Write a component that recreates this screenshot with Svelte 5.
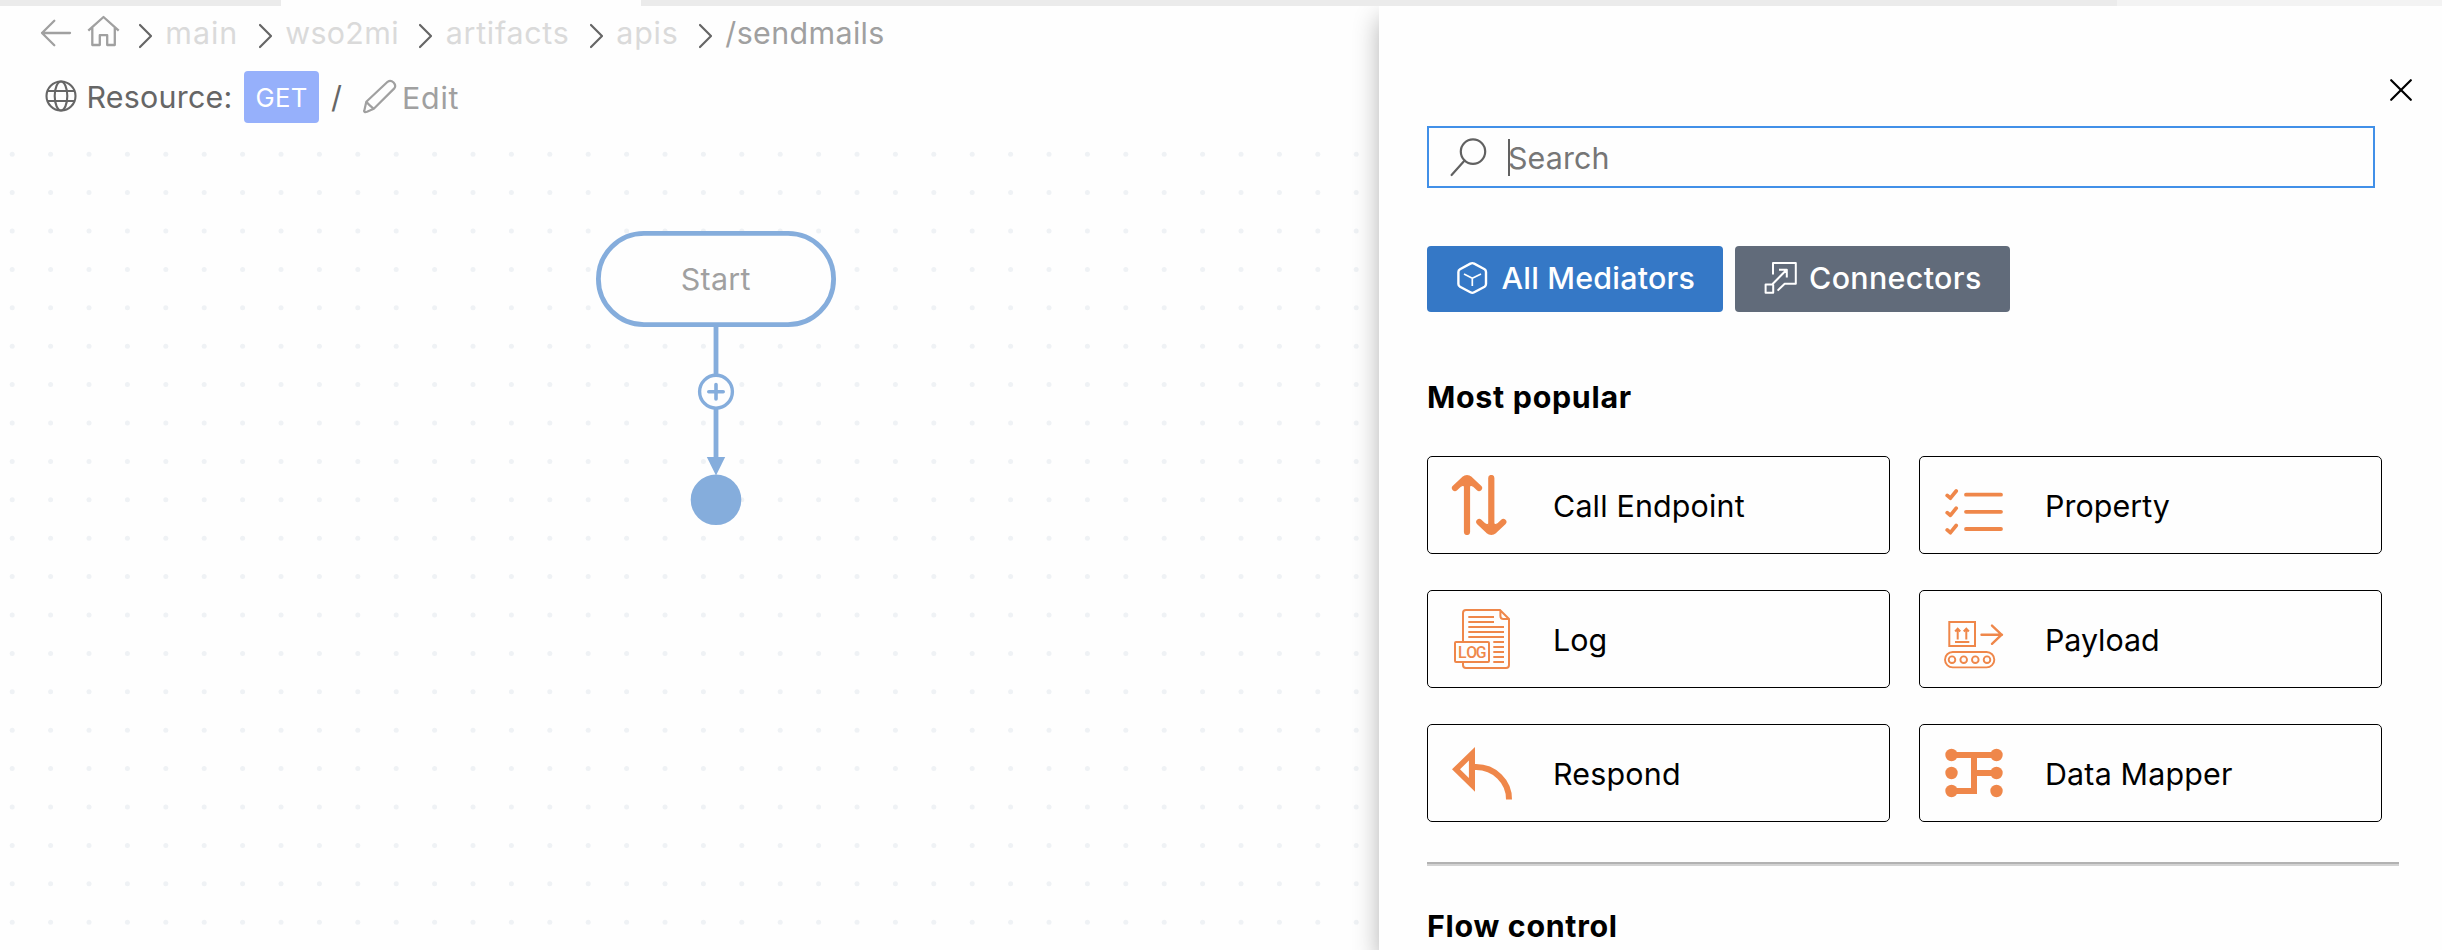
<script>
  const crumbs = [
    { label: 'main', track: 1 },
    { label: 'wso2mi', track: 0.34 },
    { label: 'artifacts', track: 0.72 },
    { label: 'apis', track: 0.76 },
    { label: '/sendmails', track: 0.37, current: true }
  ];
  const mediators = [
    { label: 'Call Endpoint', icon: 'call', track: 0.18 },
    { label: 'Property', icon: 'property', track: 0.06 },
    { label: 'Log', icon: 'log', track: 0.1 },
    { label: 'Payload', icon: 'payload', track: -0.05 },
    { label: 'Respond', icon: 'respond', track: 0.22 },
    { label: 'Data Mapper', icon: 'mapper', track: 0.18 }
  ];
  const columns = Array.from({ length: 36 }, (_, i) => 12.2 + i * 38.4);
  const rows = Array.from({ length: 21 }, (_, i) => 154.2 + i * 38.4);
</script>

<div class="app">
  <div class="tabs"><i class="t1"></i><i class="t2"></i><i class="t3"></i><i class="t4"></i></div>
  <div class="main">
    <section class="editor">
      <nav class="crumbs">
        <svg class="back" width="32" height="32" viewBox="40 17 32 32"><path d="M70 33H42M54.3 20.7L42 33L54.3 45.3" /></svg>
        <svg class="home" width="34" height="34" viewBox="87 15 34 34"><path d="M88.3 30.7L103.5 17L118.7 30.7M92.3 27.5V45H99.8V35.2H107.2V45H114.8V27.5" /></svg>
        {#each crumbs as c}
          <svg class="chev" width="13" height="26" viewBox="0 0 13 26"><path d="M1 2L12 13L1 24" /></svg>
          <span class:current={c.current} style:letter-spacing="{c.track}px">{c.label}</span>
        {/each}
      </nav>
      <div class="resource">
        <svg class="globe" width="32" height="32" viewBox="0 0 32 32">
          <circle cx="16" cy="16" r="14.5" /><ellipse cx="16" cy="16" rx="6.3" ry="14.5" /><path d="M2.2 11H29.8M2.2 21H29.8" />
        </svg>
        <span class="res">Resource:</span>
        <span class="verb">GET</span>
        <span class="slash">/</span>
        <svg class="pencil" width="36" height="36" viewBox="361 78 36 36">
          <path d="M364 112L366.3 101.8L387.6 81.8Q390.6 79.7 393.6 82.5Q396.4 85.6 394.3 88.4L373.8 108.8L367 111.8Q364 113 364 110.2M366.3 101.8Q369.3 105.5 373.8 108.8" />
        </svg>
        <span class="edit">Edit</span>
      </div>
      <svg class="canvas" width="1379" height="815" viewBox="0 135 1379 815">
        <g fill="#eff2f5">
          {#each rows as y}{#each columns as x}<circle cx={x} cy={y} r="2.5" />{/each}{/each}
        </g>
        <g stroke="#85addc" fill="none">
          <rect x="598.4" y="233.4" width="235.2" height="91.2" rx="45.6" stroke-width="4.8" fill="#fefefe" />
          <path d="M716 327V458" stroke-width="4.8" />
          <circle cx="716" cy="391.7" r="16.4" stroke-width="3.4" fill="#fefefe" />
          <path d="M708.8 391.7H723.2M716 384.5V398.9" stroke-width="3.6" stroke-linecap="round" />
        </g>
        <path d="M706.8 457H725.2L716 475.5Z" fill="#85addc" />
        <circle cx="716" cy="499.8" r="25.3" fill="#85addc" />
        <text x="680.8" y="289.6">Start</text>
      </svg>
    </section>

    <aside class="panel">
      <div class="close"><svg width="22" height="22" viewBox="0 0 22 22"><path d="M1.2 1.2L20.8 20.8M20.8 1.2L1.2 20.8" /></svg></div>
      <div class="search">
        <svg width="38" height="40" viewBox="0 0 38 40"><circle cx="24" cy="14.6" r="12.2" /><path d="M15.6 23.6L2.6 38" /></svg>
        <span class="caret"></span><span class="ph">Search</span>
      </div>
      <div class="filters">
        <button class="on">
          <svg width="34" height="36" viewBox="1455 260 34 36">
            <path stroke-width="2.4" d="M1470.4 263.6Q1472.3 262.6 1474.2 263.6L1484.6 269.3Q1486 270.2 1486 272V284Q1486 285.8 1484.6 286.7L1474.2 292.3Q1472.3 293.4 1470.4 292.3L1460 286.7Q1458.4 285.8 1458.4 284V272Q1458.4 270.2 1460 269.3Z" />
            <path stroke-width="1.7" d="M1464 274L1472.3 278.2L1481 274M1472.3 278.2V286" />
          </svg>
          <span>All Mediators</span>
        </button>
        <button>
          <svg width="34" height="36" viewBox="1763 260 34 36">
            <path stroke-width="2" d="M1765.6 284.4H1773.2V292.8H1765.6ZM1773 274.5V263H1795.8V283.7H1784.7L1777.6 290.6M1772.6 284L1786.4 270M1779 269.8H1786.8V277.6" />
          </svg>
          <span class="conn">Connectors</span>
        </button>
      </div>
      <h2>Most popular</h2>
      <div class="grid">
        {#each mediators as m}
          <div class="card">
            <svg width="70" height="60" viewBox="0 0 70 60">
              {#if m.icon === 'call'}
                <g id="arrow-up">
                  <path d="M22 6V57M10 13L19 4.5Q22 2 25 4.5L34 13" fill="none" stroke-width="6.2" stroke-linecap="round" />
                  <path d="M15.6 12.3Q18 10 19.5 12V6H24.5V12Q26 10 28.4 12.3L23 3H21Z" stroke="none" fill="#ef874a" />
                </g>
                <use href="#arrow-up" transform="rotate(180 34.15 30)" />
              {:else if m.icon === 'property'}
                <path d="M29 19.7H64M29 36.8H64M29 54H64" stroke-width="3.8" stroke-linecap="round" />
                <path d="M10.2 20.4L13.4 23.2L19.2 16M10.2 37.6L13.4 40.4L19.2 33.2M10.2 54.9L13.4 57.7L19.2 50.5" stroke-width="3.7" stroke-linecap="round" stroke-linejoin="round" />
              {:else if m.icon === 'log'}
                <path d="M18 32V4Q18 1 21 1H55L64 10V56Q64 59 61 59H21Q18 59 18 56V54M55.4 1.5V7Q55.4 10 58.4 10H63.6" stroke-width="2" />
                <path d="M23.3 8H49M23.3 13H49M23.3 18H59M23.3 23H59M23.3 28H59M48.3 33H59M48.3 38H59M48.3 43H59M48.3 48H59M48.3 53H59" stroke-width="2" />
                <rect x="10" y="33" width="34" height="20" rx="1" stroke-width="2" />
                <text y="48.8"><tspan x="13">L</tspan><tspan x="21.3">O</tspan><tspan x="30.8">G</tspan></text>
              {:else if m.icon === 'payload'}
                <path d="M12.3 13H38V37H12.3ZM20.7 30.4V20.5M29.3 30.4V20.5M18 32.9H32.3" stroke-width="2" />
                <path d="M18.2 22.6L20.7 19.9L23.2 22.6M26.8 22.6L29.3 19.9L31.8 22.6" stroke-width="2.2" />
                <path d="M44.5 25.7H65M55 16.6L64.6 25.7L55 34.8" stroke-width="2.4" stroke-linecap="round" />
                <rect x="8" y="43" width="49.3" height="15.4" rx="7.7" stroke-width="1.9" />
                {#each [15, 26.7, 38.3, 50] as x}<circle cx={x} cy="50.7" r="3.3" stroke-width="1.9" />{/each}
              {:else if m.icon === 'respond'}
                <path d="M7 26.3L30 4V48.7ZM15 26.3L23.9 35V17.6Z" fill="#ef874a" stroke="none" fill-rule="evenodd" />
                <path d="M28 24H31A33 32 0 0 1 64 56.5" stroke-width="6" />
              {:else}
                <path d="M14.5 12H59.5M37 12V51M37 30H59.5M14.5 48H40" stroke-width="6" />
                {#each [[14.5, 12], [59.5, 12], [14.5, 30], [59.5, 30], [14.5, 48], [59.5, 48]] as [x, y]}
                  <circle cx={x} cy={y} r="6.2" fill="#ef874a" stroke="none" />
                {/each}
              {/if}
            </svg>
            <span style:letter-spacing="{m.track}px">{m.label}</span>
          </div>
        {/each}
      </div>
      <div class="rule"></div>
      <h2 class="flow">Flow control</h2>
    </aside>
  </div>
</div>

<style>
  :global(body) { background: #fefefe; overflow: hidden; }
  .app {
    width: 2442px; height: 950px; display: flex; flex-direction: column; overflow: hidden;
    background: #fefefe; font-family: Inter, "Liberation Sans", sans-serif; font-size: 30.4px; line-height: 40px; color: #000;
  }
  svg { flex: none; fill: none; }
  span { white-space: nowrap; }
  .tabs { display: flex; height: 6px; flex: none; }
  .t1 { width: 281px; background: #ebebeb; }
  .t2 { width: 360px; }
  .t3 { width: 1476px; background: #ebebeb; }
  .t4 { flex: 1; background: #f3f3f3; }
  .main { display: flex; flex: 1; min-height: 0; }

  .editor { width: 1379px; flex: none; display: flex; flex-direction: column; }
  .crumbs { display: flex; align-items: center; height: 56px; padding: 0 0 0 40px; box-sizing: border-box; color: #dadada; flex: none; margin-bottom: 3px; }
  .back, .home { stroke: #a0a0a0; stroke-width: 2.3; stroke-linecap: round; stroke-linejoin: round; margin-top: -2px; }
  .home { margin-left: 15px; stroke-linecap: butt; margin-top: -4px; }
  .chev { margin: 3px 13.6px 0 20.3px; stroke: #666; stroke-width: 2.2; stroke-linecap: round; }
  .home + .chev { margin-left: 17.7px; }
  .crumbs span { margin-top: -3px; }
  .current { color: #a0a0a0; }

  .resource { display: flex; align-items: center; height: 64px; flex: none; padding-left: 45px; color: #666; margin-bottom: 6px; }
  .globe { stroke: #666; stroke-width: 2.1; margin-top: -3px; }
  .res { margin-left: 9.5px; letter-spacing: .24px; }
  .verb { margin-left: 11.5px; width: 75px; height: 52px; border-radius: 4px; background: #96b0fb; color: #fff; font-size: 25.7px; line-height: 53px; text-align: center; letter-spacing: .3px; }
  .slash { margin-left: 12px; }
  .pencil { margin-left: 19px; margin-top: -3px; stroke: #a0a0a0; stroke-width: 2.2; stroke-linejoin: round; }
  .edit { margin-left: 5px; color: #a0a0a0; letter-spacing: .8px; margin-top: 1px; }
  .canvas { display: block; }
  .canvas text { fill: #a0a0a0; font-size: 30.4px; letter-spacing: .3px; }

  .panel { flex: 1; display: flex; flex-direction: column; background: #fefefe; box-shadow: 0 12px 24px rgba(0, 0, 0, .3); clip-path: inset(0 0 0 -40px); padding-left: 48px; }
  .close { display: flex; height: 120px; box-sizing: border-box; padding: 72.7px 30px 0 0; justify-content: flex-end; }
  .close svg { stroke: #000; stroke-width: 2.2; stroke-linecap: round; }
  .search { display: flex; align-items: center; width: 948px; height: 62px; box-sizing: border-box; border: 2px solid #4190e8; padding-left: 20px; flex: none; }
  .search svg { stroke: #616161; stroke-width: 2.2; stroke-linecap: round; }
  .caret { width: 2px; height: 37px; background: #616161; margin-left: 21px; }
  .ph { color: #767676; letter-spacing: .1px; margin-left: -2px; margin-top: 1px; }
  .filters { display: flex; gap: 12px; margin-top: 58px; }
  button { display: flex; align-items: center; height: 66px; border: 0; border-radius: 4px; background: #616b7a; color: #fff; font: 500 30.4px/40px Inter, sans-serif; padding: 0 28px; }
  button svg { stroke: #fff; stroke-linejoin: round; margin-top: -2px; }
  button.on { background: #3578c6; width: 296px; }
  button:not(.on) { width: 275px; }
  button span { margin: -2px 0 0 12.5px; letter-spacing: .22px; }
  button .conn { margin-left: 12px; letter-spacing: .35px; }
  h2 { margin: 65px 0 0; font-size: 30.4px; line-height: 40px; font-weight: 700; letter-spacing: .7px; height: 40px; flex: none; }
  .grid { display: grid; grid-template-columns: 463px 463px; gap: 36px 29px; margin-top: 39px; }
  .card { display: flex; align-items: center; height: 98px; box-sizing: border-box; border: 1px solid #000; border-radius: 5px; padding-left: 17px; }
  .card svg { stroke: #ef874a; }
  .card svg text { fill: #ef874a; stroke: none; font: 500 15.8px "Roboto", sans-serif; }
  .card span { margin: 1px 0 0 38px; }
  .rule { width: 972px; height: 4px; background: linear-gradient(#b2b2b2 50%, #d3d3d3 50%); margin-top: 40px; flex: none; }
  .flow { margin-top: 40px; }
</style>
